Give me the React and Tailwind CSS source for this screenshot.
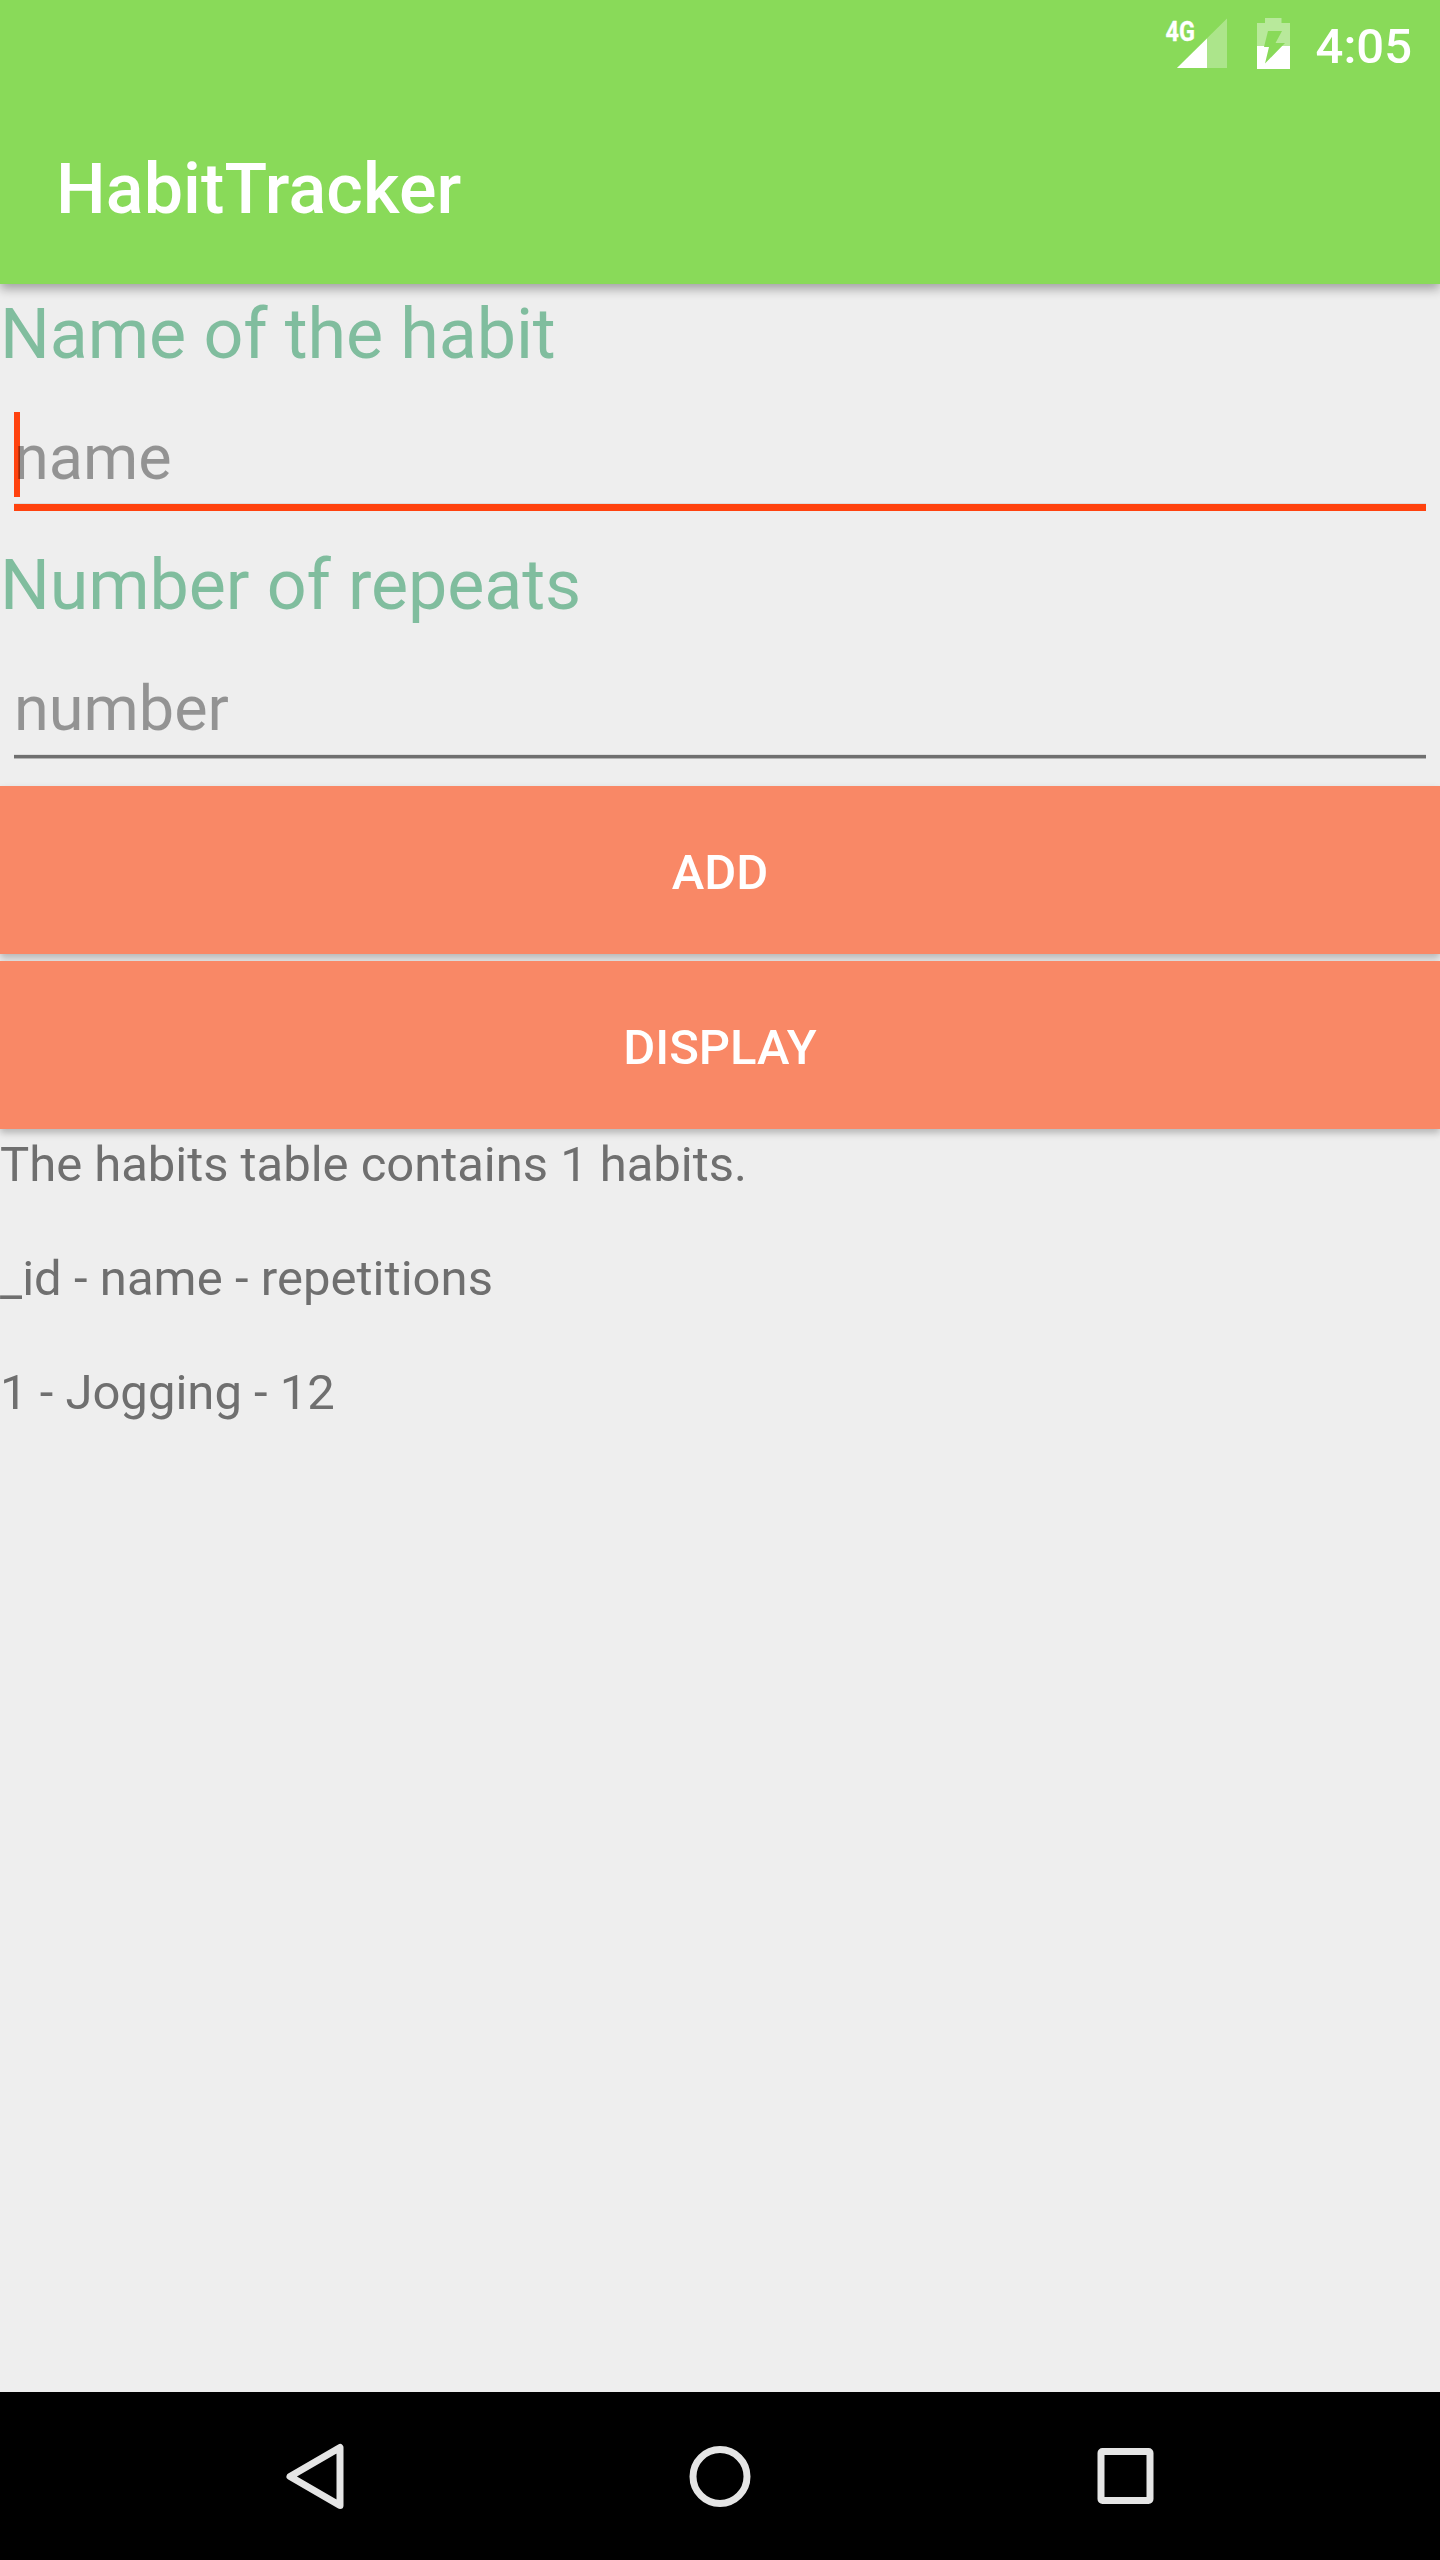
function StatusBar() {
  return (
    <div className="flex h-[84px] justify-end text-white">
      <svg className="mr-[30px] h-[84px] w-[64px]" viewBox="0 0 64 84" fill="currentColor">
        <text x="2.5" y="41" fontSize="28.500" fontWeight="700" fontFamily="Roboto" textLength="29.500" lengthAdjust="spacingAndGlyphs" stroke="currentColor" strokeWidth=".3">4G</text>
        <path d="M14 68 64 18.500V68Z" opacity=".3" />
        <path d="M14 68 44 38.500V68Z" />
      </svg>
      <svg className="mr-[26px] h-[84px] w-[33px]" viewBox="0 0 33 84">
        <path d="M0 23H8V18H24.500V23H33V46H0Z" fill="#fff" opacity=".4" />
        <path d="M0 46H33V69H0Z" fill="#fff" />
        <path d="M11 31H25L18.500 43H28L8 63.500 12 47H7Z" fill="#89da59" />
      </svg>
      <span className="mr-[28px] pt-[18px] text-[49px] leading-[57px] font-medium">4:05</span>
    </div>
  );
}

function Label({ children }) {
  return (
    <div className="h-[93px] pt-[9px] text-[70px] leading-[82px] tracking-[-0.1px] text-[#80bd9e]">{children}</div>
  );
}

function Field({ hint, focused }) {
  return (
    <div className="relative mx-[14px] h-[158px] pt-[43px] text-[63px] leading-[75px]">
      {focused && <span className="absolute top-[35px] left-0 h-[85px] w-[6px] bg-[#ff420e]" />}
      <div className="relative h-[83px] text-black/38">{hint}</div>
      {focused ? (
        <div className="h-2 border-t border-[#dddddd] bg-[#ff420e]" />
      ) : (
        <div className="h-[5px] border-t border-b border-t-[#dddddd] border-b-[#b4b4b4] bg-[#6f6f6f]" />
      )}
    </div>
  );
}

function Action({ children }) {
  return (
    <button className="block h-[168px] w-full bg-[#f98866] pt-[6px] text-[49px] leading-[58px] font-medium text-white shadow-[0_4px_7px_rgba(0,0,0,0.24)]">
      {children}
    </button>
  );
}

export default function App() {
  return (
    <div className="flex h-[2560px] w-[1440px] flex-col overflow-hidden bg-[#eeeeee] font-[Roboto,sans-serif]">
      <header className="h-[284px] shrink-0 bg-[#89da59] shadow-[0_5px_10px_rgba(0,0,0,0.32)]">
        <StatusBar />
        <h1 className="pt-[64px] pl-[56px] text-[70px] leading-[82px] font-medium tracking-[0.12px] text-white">
          HabitTracker
        </h1>
      </header>
      <main className="grow">
        <Label>Name of the habit</Label>
        <Field hint="name" focused />
        <Label>Number of repeats</Label>
        <Field hint="number" />
        <div className="flex flex-col gap-[7px]">
          <Action>ADD</Action>
          <Action>DISPLAY</Action>
        </div>
        <div className="pt-[7px] text-[49px] leading-[57px] text-[#6f6f6f]">
          <p className="tracking-[-0.03px]">The habits table contains 1 habits.</p>
          <p className="mt-[57px] tracking-[0.05px]">_id - name - repetitions</p>
          <p className="mt-[57px]">1 - Jogging - 12</p>
        </div>
      </main>
      <nav className="flex h-[168px] shrink-0 items-center bg-black pl-[280px] text-[#e5e5e5]">
        <svg className="h-[80px] w-[70px]" viewBox="0 0 70 80" fill="none" stroke="currentColor" strokeWidth="7" strokeLinejoin="round">
          <path d="M60 11.500V69.500L10 40.500Z" />
        </svg>
        <svg className="ml-[335px] h-[80px] w-[70px]" viewBox="0 0 70 80" fill="none" stroke="currentColor" strokeWidth="7">
          <circle cx="35" cy="40.500" r="27" />
        </svg>
        <svg className="ml-[335px] h-[80px] w-[70px]" viewBox="0 0 70 80" fill="none" stroke="currentColor" strokeWidth="7" strokeLinejoin="round">
          <rect x="11" y="15.500" width="49" height="49" rx="1.500" />
        </svg>
      </nav>
    </div>
  );
}
